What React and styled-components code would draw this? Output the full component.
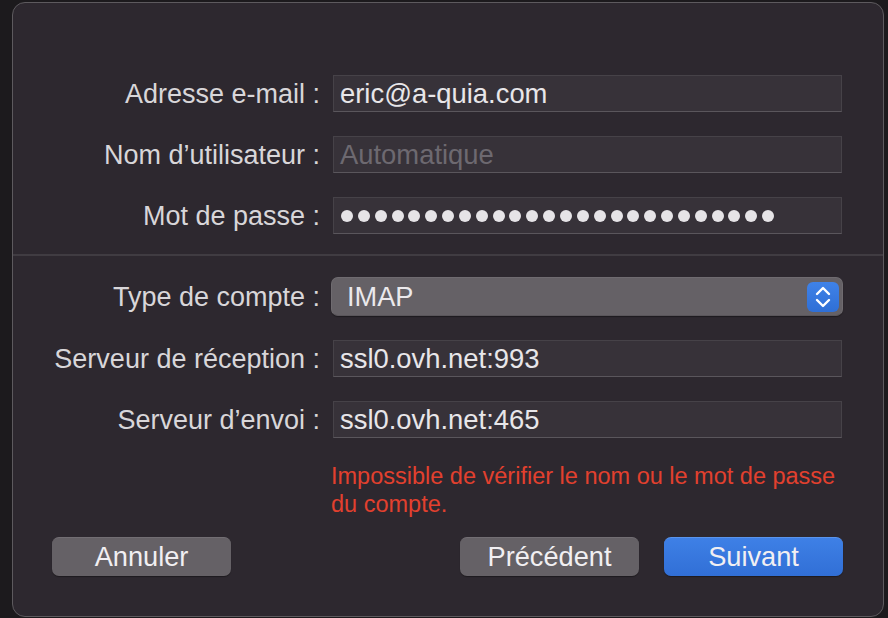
import React from "react";
import styled, { createGlobalStyle } from "styled-components";

const Global = createGlobalStyle`
  html, body { margin: 0; padding: 0; background: #1c1a1d; }
  body { font-family: "Liberation Sans", Arial, sans-serif; }
  * { box-sizing: border-box; }
`;

const Stage = styled.div`
  width: 888px;
  height: 618px;
  padding: 2px 4px 1px 12px;
  background: #1c1a1d;
`;

const Dialog = styled.div`
  width: 872px;
  height: 615px;
  background: #2d282f;
  border: 1px solid #5d5a5e;
  border-radius: 13px;
  display: flex;
  flex-direction: column;
  overflow: hidden;
`;

const Form = styled.div`
  display: grid;
  grid-template-columns: 1fr 509px;
  column-gap: 13px;
  row-gap: ${(p) => p.$gap}px;
  padding: ${(p) => p.$pt}px 41px 0 0;
  align-items: center;
`;

const Label = styled.div`
  text-align: right;
  color: #d8d6d9;
  font-size: 27px;
  height: 37px;
  line-height: 38px;
  white-space: nowrap;
`;

const Field = styled.div`
  height: 37px;
  background: #373239;
  border: 1px solid #464248;
  border-bottom-color: #5a565c;
  padding: 1px 6px 0;
  display: flex;
  align-items: center;
  font-size: 27.4px;
  color: ${(p) => (p.$placeholder ? "#6d6970" : "#e8e6e9")};
  white-space: nowrap;
`;

const Dots = styled.div`
  display: flex;
  gap: 4.85px;
  padding-left: 1px;
`;

const Dot = styled.span`
  width: 12px;
  height: 12px;
  border-radius: 50%;
  background: #e6e4e7;
`;

const Separator = styled.div`
  height: 2px;
  background: #403c42;
  margin-top: 20px;
`;

const Popup = styled.div`
  height: 39px;
  margin: 0 -1px 0 -2px;
  border-radius: 7px;
  background: #656166;
  border: 1px solid #6f6b70;
  border-bottom-color: #5a565b;
  box-shadow: 0 1px 1px rgba(0, 0, 0, 0.35);
  display: flex;
  align-items: center;
  justify-content: space-between;
  padding: 1px 3px 0 15px;
  font-size: 27.2px;
  color: #ebe9ec;
`;

const Stepper = styled.div`
  width: 32px;
  height: 30px;
  margin-top: -1px;
  border-radius: 6px;
  background: linear-gradient(#3f82e8, #2f6fd6);
  display: flex;
  align-items: center;
  justify-content: center;
`;

const ErrorText = styled.div`
  grid-column: 2;
  margin-left: -2px;
  color: #e2402e;
  font-size: 23.5px;
  line-height: 28px;
`;

const Buttons = styled.div`
  display: flex;
  align-items: center;
  padding: 19px 40px 0 39px;
  gap: 25px;
`;

const Spacer = styled.div`
  flex: 1;
`;

const Button = styled.div`
  width: 179px;
  height: 39px;
  border-radius: 7px;
  display: flex;
  align-items: center;
  justify-content: center;
  font-size: 27.2px;
  color: #f1eff2;
  background: ${(p) =>
    p.$primary ? "linear-gradient(#3e80e6, #316fd6)" : "#656166"};
  border-top: 1px solid ${(p) => (p.$primary ? "#5a94ec" : "#726e73")};
  box-shadow: 0 1px 1px rgba(0, 0, 0, 0.35);
`;

function Chevrons() {
  return (
    <svg width="20" height="26" viewBox="0 0 20 26" fill="none">
      <path
        d="M4 10 L10 4 L16 10"
        stroke="#fff"
        strokeWidth="2.4"
        strokeLinecap="round"
        strokeLinejoin="round"
      />
      <path
        d="M4 16 L10 22 L16 16"
        stroke="#fff"
        strokeWidth="2.4"
        strokeLinecap="round"
        strokeLinejoin="round"
      />
    </svg>
  );
}

export default function App() {
  return (
    <>
      <Global />
      <Stage>
        <Dialog>
          <Form $pt={72} $gap={24}>
            <Label>Adresse e-mail :</Label>
            <Field>eric@a-quia.com</Field>
            <Label>Nom d’utilisateur :</Label>
            <Field $placeholder>Automatique</Field>
            <Label>Mot de passe :</Label>
            <Field>
              <Dots>
                {Array.from({ length: 26 }).map((_, i) => (
                  <Dot key={i} />
                ))}
              </Dots>
            </Field>
          </Form>
          <Separator />
          <Form $pt={21} $gap={24}>
            <Label>Type de compte :</Label>
            <Popup>
              IMAP
              <Stepper>
                <Chevrons />
              </Stepper>
            </Popup>
            <Label>Serveur de réception :</Label>
            <Field>ssl0.ovh.net:993</Field>
            <Label>Serveur d’envoi :</Label>
            <Field>ssl0.ovh.net:465</Field>
            <ErrorText>
              Impossible de vérifier le nom ou le mot de passe
              <br />
              du compte.
            </ErrorText>
          </Form>
          <Buttons>
            <Button>Annuler</Button>
            <Spacer />
            <Button>Précédent</Button>
            <Button $primary>Suivant</Button>
          </Buttons>
        </Dialog>
      </Stage>
    </>
  );
}
